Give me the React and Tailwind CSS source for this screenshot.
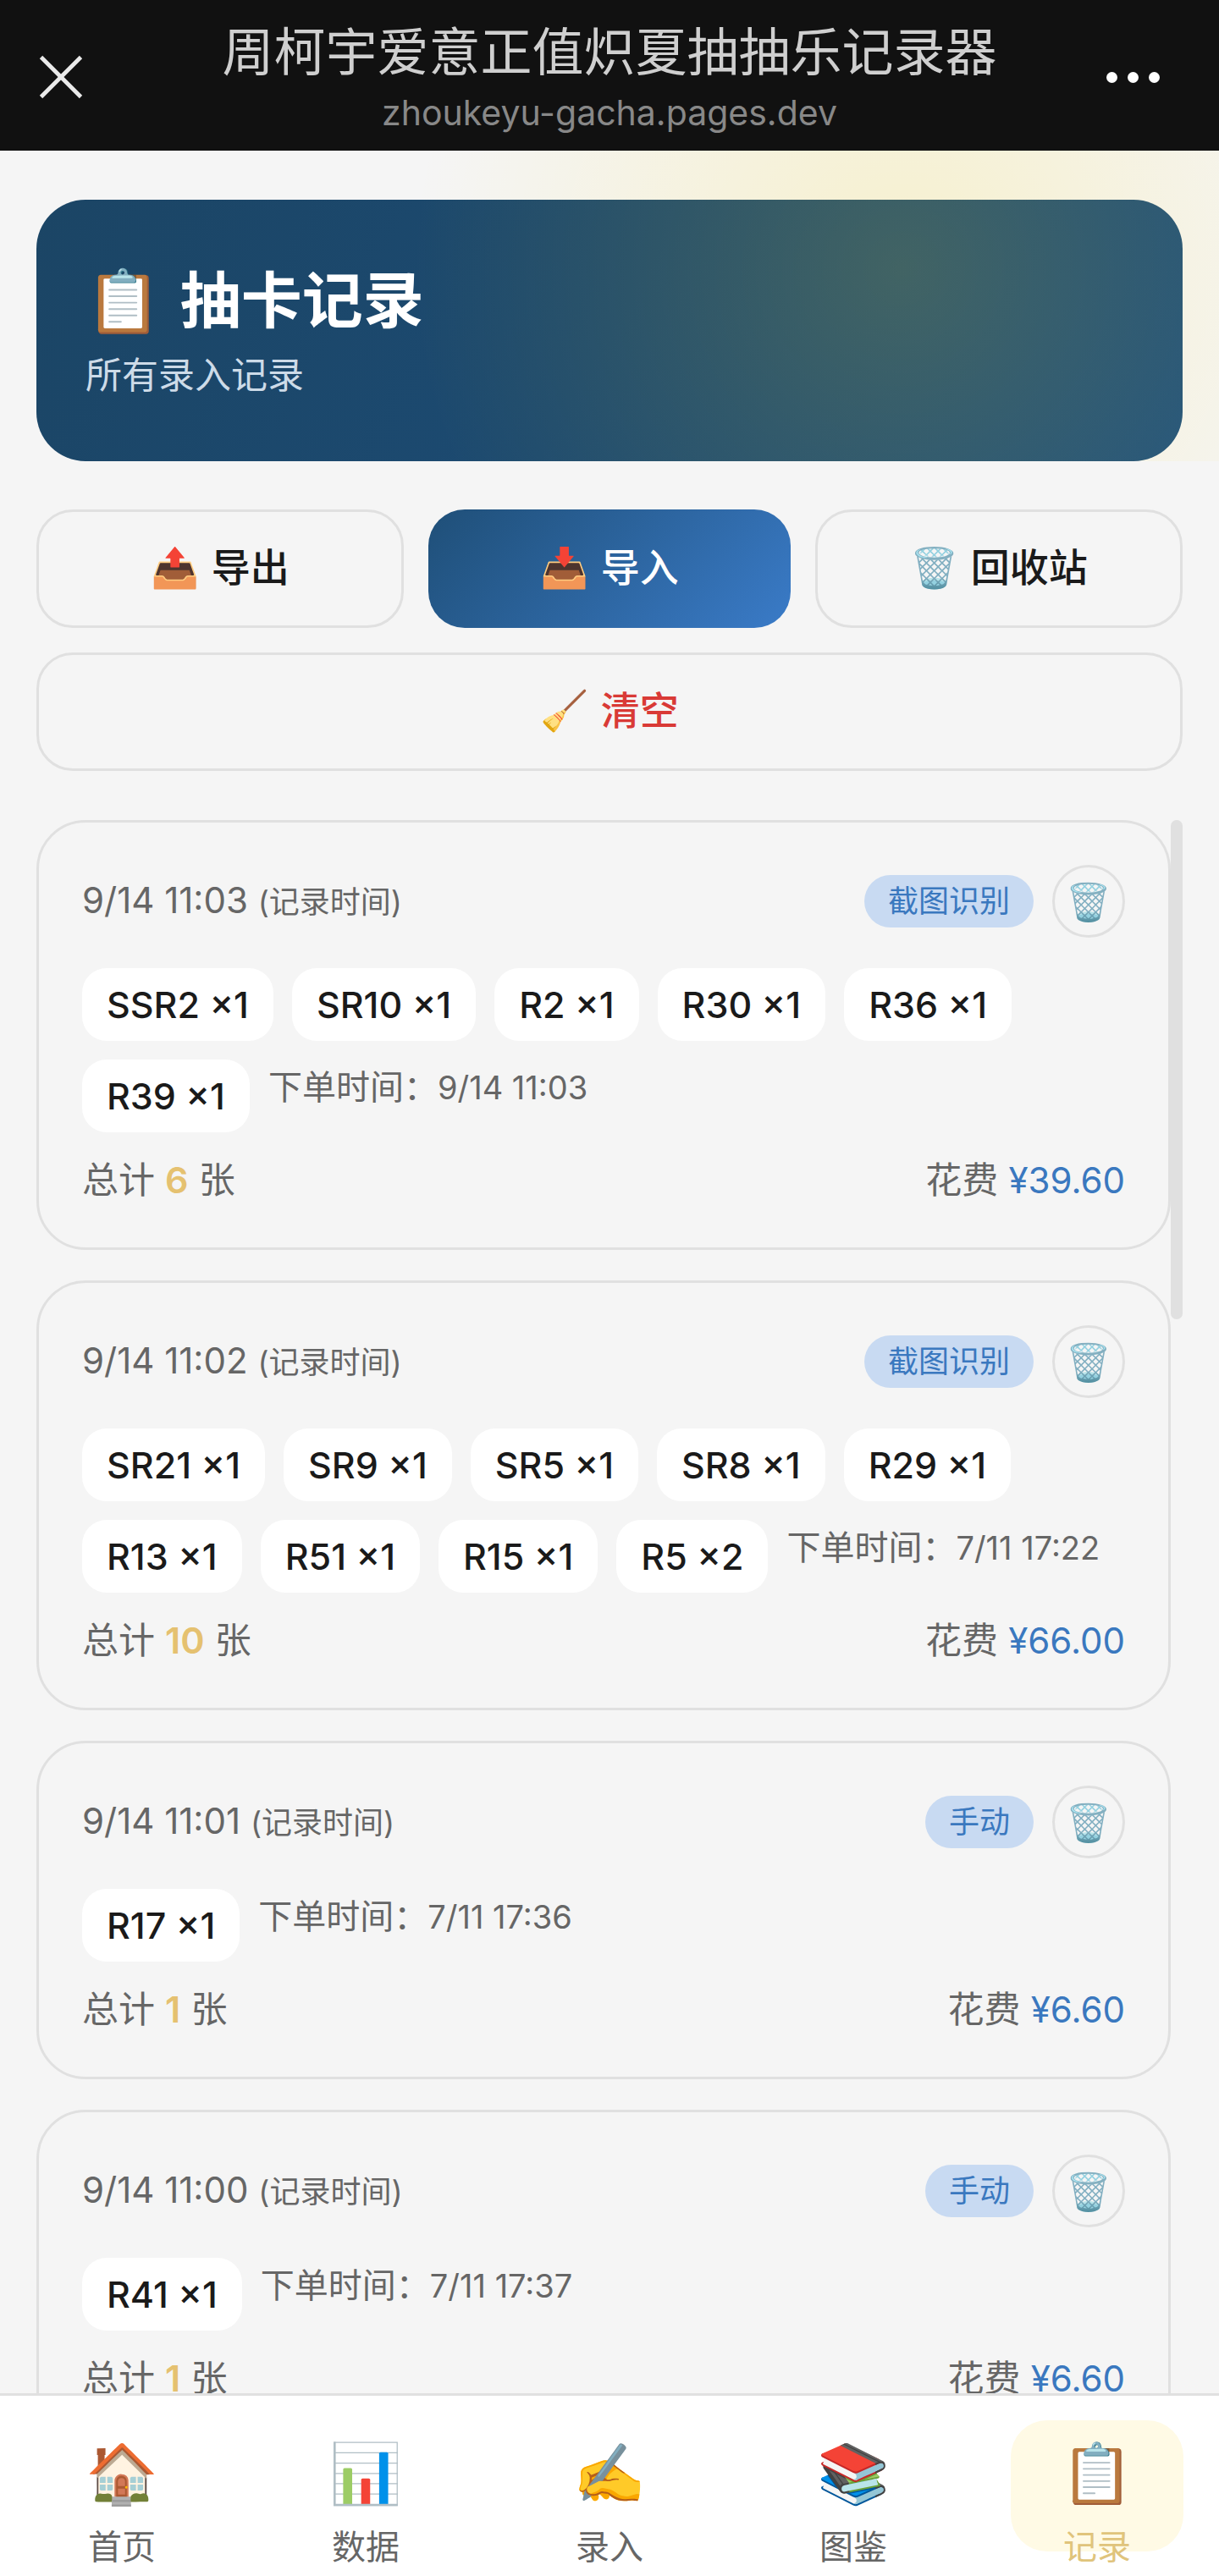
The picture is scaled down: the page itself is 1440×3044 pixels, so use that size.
import { X } from "lucide-react";

const records = [
  {
    time: "9/14 11:03",
    source: "截图识别",
    cards: ["SSR2 ×1", "SR10 ×1", "R2 ×1", "R30 ×1", "R36 ×1", "R39 ×1"],
    ordered: "9/14 11:03",
    total: 6,
    cost: "¥39.60",
  },
  {
    time: "9/14 11:02",
    source: "截图识别",
    cards: ["SR21 ×1", "SR9 ×1", "SR5 ×1", "SR8 ×1", "R29 ×1", "R13 ×1", "R51 ×1", "R15 ×1", "R5 ×2"],
    ordered: "7/11 17:22",
    total: 10,
    cost: "¥66.00",
  },
  {
    time: "9/14 11:01",
    source: "手动",
    cards: ["R17 ×1"],
    ordered: "7/11 17:36",
    total: 1,
    cost: "¥6.60",
  },
  {
    time: "9/14 11:00",
    source: "手动",
    cards: ["R41 ×1"],
    ordered: "7/11 17:37",
    total: 1,
    cost: "¥6.60",
  },
];

const tabs = [
  { icon: "🏠", label: "首页" },
  { icon: "📊", label: "数据" },
  { icon: "✍️", label: "录入" },
  { icon: "📚", label: "图鉴" },
  { icon: "📋", label: "记录", active: true },
];

function TitleBar() {
  return (
    <header className="grid h-[178px] shrink-0 grid-cols-[144px_1fr_144px] items-center bg-[#111111] pt-1">
      <button type="button" aria-label="关闭" className="flex h-24 items-center justify-center text-[#eaeaea]">
        <X size={94} strokeWidth={1.2} strokeLinecap="butt" />
      </button>
      <div className="flex flex-col items-center pt-1">
        <h1 className="text-[61px] leading-[80px] text-[#cfcfcf]">周柯宇爱意正值炽夏抽抽乐记录器</h1>
        <p className="text-[41px] leading-[62px] text-[#888888]">zhoukeyu-gacha.pages.dev</p>
      </div>
      <button type="button" aria-label="更多" className="flex h-24 items-center gap-3 pl-[11px]">
        <span className="size-[13px] rounded-full bg-white" />
        <span className="size-[13px] rounded-full bg-white" />
        <span className="size-[13px] rounded-full bg-white" />
      </button>
    </header>
  );
}

function ActionButton({ icon, children, className }) {
  return (
    <button
      type="button"
      className={`flex h-[140px] items-center justify-center gap-[14px] rounded-[43px] px-5 pb-1 text-[46px] font-medium ${className}`}
    >
      <span>{icon}</span>
      {children}
    </button>
  );
}

function RecordCard({ record }) {
  return (
    <article className="rounded-[58px] border-3 border-[#e0e0e0] px-[51px] pt-[50px] pb-[47px] text-[#666666]">
      <div className="flex items-center justify-between">
        <p className="text-[42px] leading-[64px]">
          {record.time} <span className="text-[36px]">(记录时间)</span>
        </p>
        <div className="flex items-center gap-[22px]">
          <span className="rounded-full bg-[#c8daf2] px-7 text-[36px] leading-[62px] text-[#3a78bf]">
            {record.source}
          </span>
          <button
            type="button"
            aria-label="删除"
            className="flex size-[86px] items-center justify-center rounded-full border-3 border-[#e0e0e0] text-[43px]"
          >
            🗑️
          </button>
        </div>
      </div>
      <ul className="mt-9 flex flex-wrap gap-[22px]">
        {record.cards.map((card) => (
          <li
            key={card}
            className="rounded-[29px] bg-white px-[29px] text-[43px] leading-[86px] font-medium text-[#1a1a1a]"
          >
            {card}
          </li>
        ))}
        <li className="text-[40px] leading-[66px]">
          下单时间：<time className="text-[38px]">{record.ordered}</time>
        </li>
      </ul>
      <div className="mt-6 flex justify-between text-[43px] leading-[64px]">
        <p>
          总计 <strong className="font-semibold text-[#e5c170]">{record.total}</strong> 张
        </p>
        <p>
          花费 <span className="text-[42px] text-[#3a78bf]">{record.cost}</span>
        </p>
      </div>
    </article>
  );
}

function TabBar() {
  return (
    <nav className="grid h-[216px] shrink-0 grid-cols-5 justify-items-center border-t-3 border-[#e0e0e0] bg-white pt-[29px]">
      {tabs.map((tab) => (
        <a
          key={tab.label}
          href="#"
          aria-current={tab.active ? "page" : undefined}
          className={`flex h-[155px] w-[204px] flex-col items-center gap-[18px] rounded-[43px] pt-[22px] ${
            tab.active ? "bg-[#fffae5] text-[#e0c47c]" : "text-[#666666]"
          }`}
        >
          <span className="text-[69px] leading-[80px]">{tab.icon}</span>
          <span className="text-[40px] leading-[60px]">{tab.label}</span>
        </a>
      ))}
    </nav>
  );
}

export default function App() {
  return (
    <div
      lang="zh-CN"
      className="flex h-screen flex-col bg-[#f5f5f5] font-['Inter','Noto_Sans_CJK_SC','Noto_Color_Emoji',sans-serif]"
    >
      <TitleBar />
      <main className="relative flex min-h-0 flex-1 flex-col px-[43px] pt-[58px]">
        <section className="flex h-[309px] shrink-0 flex-col justify-center rounded-[58px] bg-linear-120 from-[#1b4565] via-[#1c4a71] to-[#1f5280] px-[58px] pt-1">
          <h2 className="flex gap-[22px] text-[72px] leading-[100px] font-semibold text-white">
            <span>📋</span>
            抽卡记录
          </h2>
          <p className="text-[43px] leading-[76px] text-[#cddbe8]">所有录入记录</p>
        </section>
        <div className="pointer-events-none absolute inset-x-0 top-0 h-[367px] bg-[radial-gradient(circle_at_1065px_140px,rgba(255,215,0,0.16),rgba(255,215,0,0)_580px)]" />
        <div className="mt-[57px] flex shrink-0 flex-wrap gap-[29px]">
          <ActionButton icon="📤" className="flex-1 border-3 border-[#e0e0e0] text-[#1a1a1a]">导出</ActionButton>
          <ActionButton icon="📥" className="flex-1 bg-linear-135 from-[#1f4f78] to-[#3a7bc8] text-white">导入</ActionButton>
          <ActionButton icon="🗑️" className="flex-1 border-3 border-[#e0e0e0] text-[#1a1a1a]">回收站</ActionButton>
          <ActionButton icon="🧹" className="w-full border-3 border-[#e0e0e0] text-[#d93a36]">清空</ActionButton>
        </div>
        <div className="mt-[58px] flex min-h-0 flex-1 overflow-hidden">
          <div className="flex min-w-0 flex-1 flex-col gap-9">
            {records.map((record) => (
              <RecordCard key={record.time} record={record} />
            ))}
          </div>
          <div className="h-[590px] w-[14px] rounded-full bg-[#e0e0e0]" />
        </div>
      </main>
      <TabBar />
    </div>
  );
}
